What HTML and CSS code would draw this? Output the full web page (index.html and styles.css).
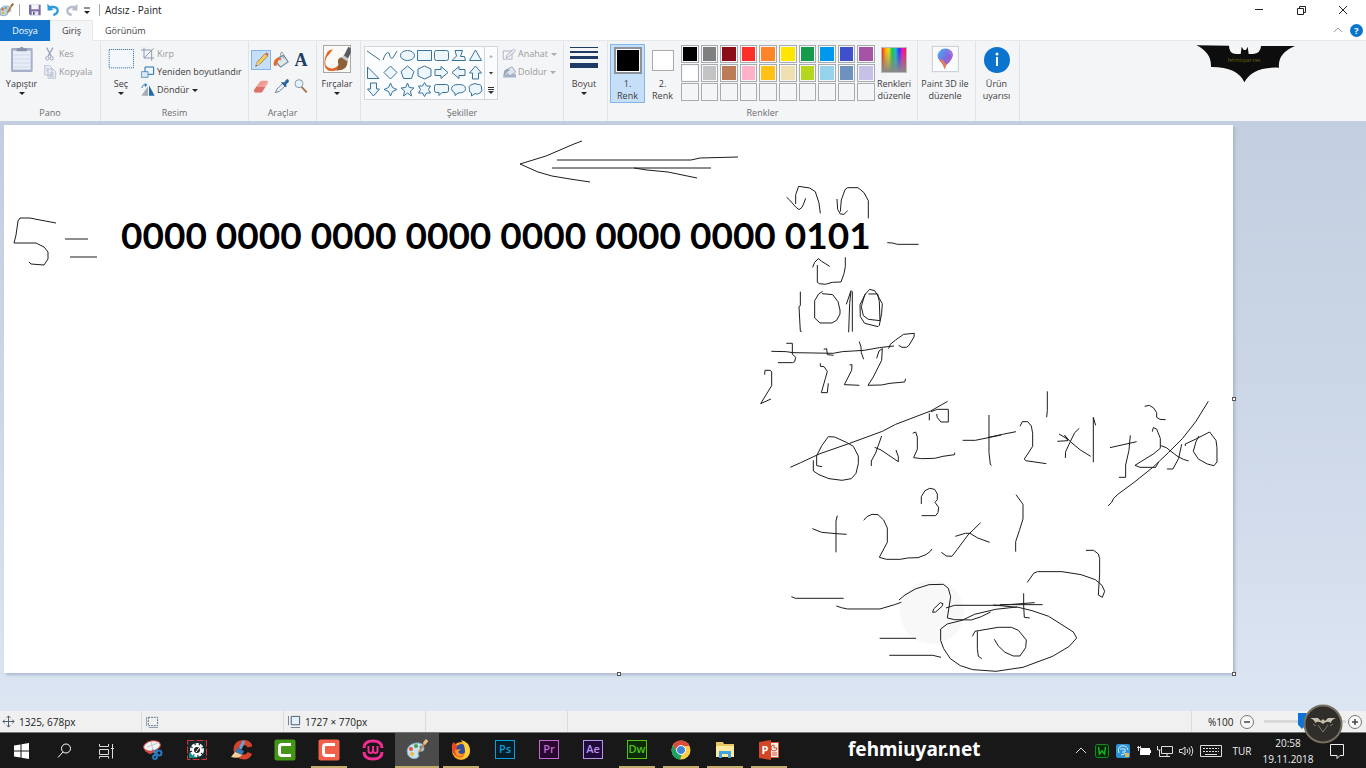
FILE: index.html
```html
<!DOCTYPE html>
<html lang="tr">
<head>
<meta charset="utf-8">
<title>Adsız - Paint</title>
<link rel="stylesheet" href="styles.css">
</head>
<body>
<header class="titlebar">
  <svg class="app-icon" viewBox="0 10 42 42"><path d="M0 32Q2 20 16 19Q32 18 33 31Q33 37 26 37Q20 38 22 45Q15 51 0 46Z" fill="#b9d3e6" stroke="#6f9cc0" stroke-width="2"/><circle cx="8" cy="29" r="4" fill="#e56a3a"/><circle cx="17" cy="25" r="3" fill="#4da63c"/><circle cx="9" cy="40" r="4" fill="#f1b52f"/><path d="M22 39L37 14" stroke="#c17b35" stroke-width="5"/><path d="M34 19L40 12" stroke="#8a5a34" stroke-width="5"/></svg>
  <span class="divider"></span>
  <button class="quick" aria-label="Kaydet"><svg viewBox="84 11 42 42"><path d="M87 16H122V48H91L87 44Z" fill="#7b6ba7"/><path d="M94 16H116V30H94Z" fill="#f6f5fb"/><path d="M95 36H115V48H95Z" fill="#e8e5f3"/><path d="M99 38H104V46H99Z" fill="#5e4f8c"/></svg></button>
  <button class="quick" aria-label="Geri al"><svg viewBox="141 11 42 42"><path d="M150 23H160Q174 24 173 35Q172 44 160 47" fill="none" stroke="#2d9bdd" stroke-width="7"/><path d="M142 13L143 34L161 32Z" fill="#2d9bdd"/></svg></button>
  <button class="quick" aria-label="Yinele"><svg viewBox="198 11 42 42"><path d="M226 23H216Q201 25 202 36Q203 44 215 47" fill="none" stroke="#b5bdcd" stroke-width="7"/><path d="M233 13L232 34L214 32Z" fill="#b5bdcd"/></svg></button>
  <button class="quick more" aria-label="Özelleştir"><svg viewBox="0 0 8 12"><path d="M1 4H7" stroke="#222"/><path d="M1 7H7L4 10Z" fill="#222"/></svg></button>
  <span class="divider"></span>
  <h1>Adsız - Paint</h1>
  <div class="window-controls">
    <button aria-label="Simge durumuna küçült"><svg viewBox="0 0 12 12"><path d="M2 5.5H10" stroke="#222"/></svg></button>
    <button aria-label="Önceki boyut"><svg viewBox="0 0 12 12"><path d="M2.500 4.500H8.500V10.500H2.500ZM4.500 4V2.500H10.500V8.500H9" fill="none" stroke="#222"/></svg></button>
    <button aria-label="Kapat"><svg viewBox="0 0 12 12"><path d="M2 2L10 10M10 2L2 10" stroke="#222"/></svg></button>
  </div>
</header>

<nav class="tabs">
  <button class="tab file">Dosya</button>
  <button class="tab active">Giriş</button>
  <button class="tab">Görünüm</button>
  <div class="tabs-end">
    <button aria-label="Şeridi küçült"><svg viewBox="0 0 12 12"><path d="M2 8L6 4L10 8" fill="none" stroke="#999"/></svg></button>
    <button class="help" aria-label="Yardım">?</button>
  </div>
</nav>

<section class="ribbon">
  <div class="group clipboard">
    <div class="group-body">
      <button class="big"><svg class="i28" viewBox="28 138 84 84"><rect x="37" y="147" width="65" height="72" rx="4" fill="#a7b0c9"/><path d="M43 155H96V212H43Z" fill="#e7ecf6"/><path d="M43 168H96M43 180H96M43 192H96M43 204H96" stroke="#d2daea" stroke-width="3"/><path d="M54 157V148H62Q69 138 76 148H85V157Z" fill="#8993ad"/></svg>Yapıştır<i class="caret"></i></button>
      <div class="stack">
        <button class="small off"><svg viewBox="133 138 36 42"><path d="M141 140L155 166M160 140L145 166" stroke="#9ba6bd" stroke-width="4"/><circle cx="143" cy="172" r="5" fill="none" stroke="#9ba6bd" stroke-width="3"/><circle cx="156" cy="172" r="5" fill="none" stroke="#9ba6bd" stroke-width="3"/></svg>Kes</button>
        <button class="small off"><svg viewBox="131 194 38 42"><path d="M134 196H149L156 203V224H134ZM144 206H159L167 214V234H144Z" fill="#eaeef6" stroke="#a7b0c5" stroke-width="2"/><path d="M138 205H144M138 211H144M148 218H162M148 224H162M148 229H162" stroke="#a7b0c5" stroke-width="2"/></svg>Kopyala</button>
      </div>
    </div>
    <h2>Pano</h2>
  </div>

  <div class="group image">
    <div class="group-body">
      <button class="big"><svg class="i28" viewBox="322 138 84 84"><path d="M328.500 151.500H401.500V206.500H328.500Z" fill="#f4f8fd" stroke="#26689f" stroke-width="3" stroke-dasharray="3 3"/></svg>Seç<i class="caret"></i></button>
      <div class="stack">
        <button class="small off"><svg viewBox="426 140 42 42"><path d="M435 142V173H466M426 149H458V181M435 173L464 144" fill="none" stroke="#8e99b2" stroke-width="3"/></svg>Kırp</button>
        <button class="small"><svg viewBox="426 196 42 42"><path d="M438 202H464V224H438Z" fill="#edf5fc" stroke="#286ca4" stroke-width="3"/><path d="M427 216H447V233H427Z" fill="#d8eafa" stroke="#286ca4" stroke-width="2"/></svg>Yeniden boyutlandır</button>
        <button class="small"><svg viewBox="424 250 42 42"><path d="M425 288L445 260V288Z" fill="#a6adb8"/><path d="M448 257L465 288H448Z" fill="#246aa7"/><path d="M427 265Q428 254 438 256" fill="none" stroke="#2875b5" stroke-width="3"/><path d="M435 250L443 256L436 262Z" fill="#2875b5"/></svg>Döndür<i class="caret"></i></button>
      </div>
    </div>
    <h2>Resim</h2>
  </div>

  <div class="group tools">
    <div class="group-body tool-grid">
      <button class="tool selected" aria-label="Kalem"><svg viewBox="36 34 54 54"><path d="M47 80L51 68L75 42L83 49L59 74Z" fill="#f6cf55" stroke="#7c6740" stroke-width="2"/><path d="M47 80L51 68L59 74Z" fill="#e5c8a0"/><path d="M75 42L80 38L86 44L83 49Z" fill="#d36a63"/><path d="M47 80L49 75L51 77Z" fill="#222"/></svg></button>
      <button class="tool" aria-label="Renk doldur"><svg viewBox="101 37 48 48"><path d="M118 55L132 48L144 66L124 80L114 69Z" fill="#dfe6ed" stroke="#71869b" stroke-width="3"/><path d="M124 62V42Q128 36 131 45V57" fill="none" stroke="#71869b" stroke-width="2"/><path d="M106 76Q103 57 119 54L126 61Q112 59 114 76Z" fill="#e86a25"/></svg></button>
      <button class="tool letter" aria-label="Metin">A</button>
      <button class="tool" aria-label="Silgi"><svg viewBox="38 110 54 54"><path d="M45 148L61 125Q64 121 69 121H84Q88 123 85 130L70 153Q68 157 63 157H48Q42 154 45 148Z" fill="#ee9c93"/><path d="M45 148L52 138H78L68 156H47Q43 154 45 148Z" fill="#dc7166"/><path d="M52 138H77L85 124" fill="none" stroke="#f7c6bf" stroke-width="2"/></svg></button>
      <button class="tool" aria-label="Renk seçici"><svg viewBox="98 110 54 54"><path d="M108 157L113 146L130 130L137 137L120 153Z" fill="#f0f5fa" stroke="#708499" stroke-width="3"/><path d="M126 127L135 127L142 118Q149 116 147 125L140 132V140Z" fill="#246da9" stroke="#194b7b" stroke-width="2"/></svg></button>
      <button class="tool" aria-label="Büyüteç"><svg viewBox="157 110 54 54"><path d="M185 139L201 156" stroke="#a77448" stroke-width="6"/><circle cx="178" cy="130" r="12" fill="#e5f1fb" stroke="#8d9cac" stroke-width="3"/></svg></button>
    </div>
    <h2>Araçlar</h2>
  </div>

  <div class="group brushes">
    <div class="group-body">
      <button class="big"><svg class="i28" viewBox="249 19 85 85"><rect x="250.500" y="20.500" width="82" height="82" fill="#fbf9f5" stroke="#a7a7a7" stroke-width="3"/><path d="M262 41Q268 32 279 33Q269 46 260 56Q246 85 276 91Q289 89 299 77L308 84Q291 101 266 97Q248 88 255 58Z" fill="#e46428"/><path d="M294 70Q294 56 309 56L324 66Q324 98 290 96Q299 84 294 70Z" fill="#8c6138"/><path d="M309 58L326 24L333 29V43L322 65Z" fill="#555b62"/><path d="M306 58L312 50L326 61L322 68Z" fill="#c6cbd0"/></svg>Fırçalar<i class="caret"></i></button>
    </div>
  </div>

  <div class="group shapes">
    <div class="group-body">
      <div class="gallery">
        <div class="shape-grid">
          <button aria-label="Çizgi"><svg viewBox="0 0 17 17"><path d="M2 4L15 13"/></svg></button>
          <button aria-label="Eğri"><svg viewBox="0 0 17 17"><path d="M1 13Q4 4 7 6Q9 15 12 9L15 4" fill="none"/></svg></button>
          <button aria-label="Oval"><svg viewBox="0 0 17 17"><ellipse cx="8.500" cy="8.500" rx="7" ry="5"/></svg></button>
          <button aria-label="Dikdörtgen"><svg viewBox="0 0 17 17"><path d="M1.500 3.500H15.500V13.500H1.500Z"/></svg></button>
          <button aria-label="Yuvarlak dikdörtgen"><svg viewBox="0 0 17 17"><rect x="1.500" y="3.500" width="14" height="10" rx="2"/></svg></button>
          <button aria-label="Çokgen"><svg viewBox="0 0 17 17"><path d="M5 3.500H12.500L10.500 9.500H14.500L15.500 13.500H2L6.500 9Z"/></svg></button>
          <button aria-label="Üçgen"><svg viewBox="0 0 17 17"><path d="M8.500 3L14.500 13.500H2.500Z"/></svg></button>
          <button aria-label="Dik üçgen"><svg viewBox="0 0 17 17"><path d="M2.500 3V14.500H14Z"/></svg></button>
          <button aria-label="Elmas"><svg viewBox="0 0 17 17"><path d="M8.500 2L15 8.500L8.500 15L2 8.500Z"/></svg></button>
          <button aria-label="Beşgen"><svg viewBox="0 0 17 17"><path d="M8.500 2L15 7.500L12.500 14.500H4.500L2 7.500Z"/></svg></button>
          <button aria-label="Altıgen"><svg viewBox="0 0 17 17"><path d="M8.500 2L15 5V12L8.500 15L2 12V5Z"/></svg></button>
          <button aria-label="Sağ ok"><svg viewBox="0 0 17 17"><path d="M2 5.500H8V2.500L15 8.500L8 14.500V11.500H2Z"/></svg></button>
          <button aria-label="Sol ok"><svg viewBox="0 0 17 17"><path d="M15 5.500H9V2.500L2 8.500L9 14.500V11.500H15Z"/></svg></button>
          <button aria-label="Yukarı ok"><svg viewBox="0 0 17 17"><path d="M5.500 15V9H2.500L8.500 2L14.500 9H11.500V15Z"/></svg></button>
          <button aria-label="Aşağı ok"><svg viewBox="0 0 17 17"><path d="M5.500 2V8H2.500L8.500 15L14.500 8H11.500V2Z"/></svg></button>
          <button aria-label="Dört köşeli yıldız"><svg viewBox="0 0 17 17"><path d="M8.500 2L10.500 6.500L15 8.500L10.500 10.500L8.500 15L6.500 10.500L2 8.500L6.500 6.500Z"/></svg></button>
          <button aria-label="Beş köşeli yıldız"><svg viewBox="0 0 17 17"><path d="M8.500 2L10.300 6.500L15 7L11.500 10L12.500 15L8.500 12L4.500 15L5.500 10L2 7L6.700 6.500Z"/></svg></button>
          <button aria-label="Altı köşeli yıldız"><svg viewBox="0 0 17 17"><path d="M8.500 1.500L10.500 5H14.500L12.500 8.500L14.500 12H10.500L8.500 15.500L6.500 12H2.500L4.500 8.500L2.500 5H6.500Z"/></svg></button>
          <button aria-label="Dikdörtgen belirtme"><svg viewBox="0 0 17 17"><path d="M3.500 3.500H13.500Q15.500 3.500 15.500 5.500V9.500Q15.500 11.500 13.500 11.500H9L6 14.500V11.500H3.500Q1.500 11.500 1.500 9.500V5.500Q1.500 3.500 3.500 3.500Z"/></svg></button>
          <button aria-label="Oval belirtme"><svg viewBox="0 0 17 17"><path d="M5 12Q1.500 10.500 1.500 7.500Q2 3.500 8.500 3.500Q15.500 3.500 15.500 7.500Q15.500 12 8 12L5 14.500Z"/></svg></button>
          <button aria-label="Bulut belirtme"><svg viewBox="0 0 17 17"><path d="M5 3.500Q8 1.500 11 3.500Q15 3.500 14.500 7Q16 10 13 12Q10 14 8 12.500L4.500 15V12Q1.500 11 2.500 8.500Q1 4.500 5 3.500Z"/></svg></button>
        </div>
        <div class="gallery-scroll">
          <button aria-label="Yukarı"><svg viewBox="0 0 12 12"><path d="M4 7.500H8L6 5Z" fill="#aaa"/></svg></button>
          <button aria-label="Aşağı"><svg viewBox="0 0 12 12"><path d="M4 5H8L6 7.500Z" fill="#333"/></svg></button>
          <button aria-label="Tümü"><svg viewBox="0 0 12 12"><path d="M3 3.500H9M3 5.500H9" stroke="#333"/><path d="M3 7H9L6 10Z" fill="#333"/></svg></button>
        </div>
      </div>
      <div class="stack">
        <button class="small off"><svg viewBox="784 20 46 42"><path d="M788 31H817V58H788Z" fill="none" stroke="#a8b0c0" stroke-width="3"/><path d="M797 53L800 44L822 25L828 31L806 51Z" fill="#e7ebf2" stroke="#909bb0" stroke-width="2"/></svg>Anahat<i class="caret"></i></button>
        <button class="small off"><svg viewBox="784 76 46 42"><path d="M788 104H830V115H788Z" fill="#a7b3c8"/><path d="M803 87L817 80L829 97L810 110L800 99Z" fill="#dfe5ef" stroke="#98a5bb" stroke-width="3"/><path d="M790 105Q788 87 804 86L811 93Q798 92 797 105Z" fill="#98a5bb"/></svg>Doldur<i class="caret"></i></button>
      </div>
    </div>
    <h2>Şekiller</h2>
  </div>

  <div class="group size">
    <div class="group-body">
      <button class="big"><svg class="i28" viewBox="0 0 28 28"><path d="M0 2H28V3H0ZM0 6H28V8H0ZM0 11H28V14H0ZM0 18H28V23H0Z" fill="#1e3a66"/></svg>Boyut<i class="caret"></i></button>
    </div>
  </div>

  <div class="group colors">
    <div class="group-body">
      <button class="color-choice selected"><span class="well black"></span>1.<br>Renk</button>
      <button class="color-choice"><span class="well white"></span>2.<br>Renk</button>
      <div class="palette">
        <button class="c1" aria-label="Siyah"></button><button class="c2" aria-label="Gri"></button><button class="c3" aria-label="Koyu kırmızı"></button><button class="c4" aria-label="Kırmızı"></button><button class="c5" aria-label="Turuncu"></button><button class="c6" aria-label="Sarı"></button><button class="c7" aria-label="Yeşil"></button><button class="c8" aria-label="Turkuaz"></button><button class="c9" aria-label="Çivit mavisi"></button><button class="c10" aria-label="Mor"></button>
        <button class="c11" aria-label="Beyaz"></button><button class="c12" aria-label="Açık gri"></button><button class="c13" aria-label="Kahverengi"></button><button class="c14" aria-label="Gül"></button><button class="c15" aria-label="Altın"></button><button class="c16" aria-label="Açık sarı"></button><button class="c17" aria-label="Limon"></button><button class="c18" aria-label="Açık turkuaz"></button><button class="c19" aria-label="Mavi gri"></button><button class="c20" aria-label="Lavanta"></button>
        <button aria-label="Özel 1"></button><button aria-label="Özel 2"></button><button aria-label="Özel 3"></button><button aria-label="Özel 4"></button><button aria-label="Özel 5"></button><button aria-label="Özel 6"></button><button aria-label="Özel 7"></button><button aria-label="Özel 8"></button><button aria-label="Özel 9"></button><button aria-label="Özel 10"></button>
      </div>
      <button class="big"><span class="rainbow"></span>Renkleri<br>düzenle</button>
    </div>
    <h2>Renkler</h2>
  </div>

  <div class="group paint3d">
    <div class="group-body">
      <button class="big"><svg class="i28" viewBox="994 31 84 84"><defs><linearGradient id="pin" x1="0" y1="0" x2="1" y2="1"><stop offset="0" stop-color="#39b8ee"/><stop offset=".5" stop-color="#7c6be0"/><stop offset="1" stop-color="#e0529b"/></linearGradient></defs><rect x="998" y="35" width="78" height="76" fill="#fafbfc" stroke="#c9ccd1" stroke-width="3"/><path d="M1035 103Q1031 88 1020 78Q1008 65 1018 52Q1029 37 1048 44Q1064 54 1057 71Q1052 83 1040 91Z" fill="url(#pin)"/><path d="M1018 73Q1031 72 1040 91L1035 103Q1031 88 1018 73Z" fill="#f27a4f"/><path d="M1042 44Q1062 49 1059 65Q1047 63 1042 44Z" fill="#9b72e3"/></svg>Paint 3D ile<br>düzenle</button>
    </div>
  </div>

  <div class="group notice">
    <div class="group-body">
      <button class="big"><svg class="i28" viewBox="0 0 28 28"><circle cx="14" cy="15" r="13" fill="#0a74cf"/><path d="M14 12V21" stroke="#fff" stroke-width="2"/><circle cx="14" cy="9" r="1.500" fill="#fff"/></svg>Ürün<br>uyarısı</button>
    </div>
  </div>

  <svg class="brand" viewBox="141 132 300 117"><path d="M142 136L240 137Q240 162 262 162H275L278 140L284 150H291L296 140L299 162H312Q335 160 336 138H438Q385 160 390 203Q310 200 286 247Q265 200 186 201Q188 158 142 136Z" fill="#0d0d0d"/><text x="285" y="186" text-anchor="middle">fehmiuyar.net</text></svg>
</section>

<main class="workspace">
  <div class="canvas">
    <svg class="ink" viewBox="4 125 1229 548" preserveAspectRatio="xMinYMin slice">
      <circle cx="932" cy="612" r="32" fill="#f8f8f8"/>
      <path d="M582 141L574 144L546 156L520 164L538 172L552 176L570 179L590 182"/>
      <path d="M557 160H691L700 158L738 157M552 168H711M634 168L647 170L668 172L697 178"/>
      <path d="M56 223L40 220L30 218H20L18 221L16 235L14 243H36L44 247L48 252V259L44 265L31 264L29 262M65 239H88M70 257H97"/>
      <g transform="translate(750 130) scale(.3333)">
        <path d="M110 202L118 209L137 231L147 239L156 232L162 219L167 205M137 222V194L146 169L179 174L196 185L207 219L211 250M261 207L263 238L271 252L282 253L293 242M271 245L274 210L285 179L293 173H324L342 188L355 212V265"/>
        <path d="M412 338L427 339L442 343H506M188 412L194 397L205 386L215 394L239 409M202 405V457L208 461L226 463L247 457L273 456L282 431L286 410V382"/>
        <path d="M151 485V527L147 530L151 604H155M218 484L206 492L194 512V564L210 579H246L260 571L270 552V540L264 515L248 494L216 491M289 523L303 482L299 520L296 607M307 484V605"/>
        <path d="M347 491L330 524L331 560L344 580L384 590L388 586L395 550L397 521L381 493L374 482L359 478L344 495L334 530L340 557L355 568L390 572L388 515L383 492H355"/>
        <path d="M64 664L109 665L128 668L250 670L277 665L343 661L388 653L432 648M109 640H127V672L137 682L134 695L128 698H84M221 658L230 656L232 674L251 676M328 635L333 651L334 668L341 688M416 656L421 643L437 630L461 613L493 610L492 621L477 646L470 652H456L446 646"/>
        <path d="M44 734L45 721H61L65 726V767L32 821L63 807M211 700V709L222 710L232 724L226 746L214 788H232L235 760M299 705L306 704L305 721L283 764L328 766M380 685L387 663L397 656L395 691L370 741L354 766L395 765L420 760L464 756L467 746"/>
      </g>
      <g transform="translate(760 380) scale(.3333)">
        <path d="M91 262L122 248L180 221L269 190L367 154L407 133L512 93L563 64M205 170L224 171L259 187L280 199L295 228V251L288 280L274 296L246 301L207 296L177 284L160 273V241M205 170L186 196L170 227V257L186 260M508 121V100M513 95L532 88H565V126H543L532 113L530 102"/>
        <path d="M365 168L347 219L334 243V258M344 202L363 210L415 245V230L408 210M458 160L467 156L472 171V208L461 233L485 236L524 235L549 229L584 224V218M608 181H646L724 165M687 105V217L691 253L695 256"/>
        <path d="M484 372V350L495 332L509 325L524 328L532 342V359L525 367L536 382L534 398L527 407H485M157 446L185 457L228 461L260 463M232 407L228 423V517M311 421L321 410L336 403L354 404L371 420L382 444V487L358 532L379 538H421L443 534L474 533L498 524L511 514L516 507"/>
        <path d="M544 517L559 528L576 529L592 508L624 465L662 428M586 469L616 460H630L653 474L689 487M94 650L106 655H251M229 678L244 683L262 687H360L404 674L424 667M417 660L435 645L466 627L507 614L550 613L565 625L572 650L562 714L584 719L634 720L664 710L692 696M558 684L584 676H720M359 775H468M388 826H518L543 832"/>
        <path d="M518 697L521 687L541 668L549 671L546 679L527 696Z" fill="#fff"/>
      </g>
      <g transform="translate(940 380) scale(.3333)">
        <path d="M240 139L247 125H263L274 138L278 160V199L267 216L253 237L257 242L319 251M322 34V92L320 112M146 172L188 163L228 155M352 184L384 182L374 166L390 184L421 210L452 229M357 162L384 178M418 145L404 158L390 187L377 215L376 234M460 247V112L467 136M510 203L590 185M571 166L567 211L557 255V292H537"/>
        <path d="M614 79L628 76L641 84L650 98V112L660 118L677 119M637 155L640 143L650 147L661 175V205L640 222L585 256L600 262H647L656 246M805 64L768 124L728 175L686 217L641 260L585 305L535 342L521 355L515 367L504 378M663 197L679 203L711 228L730 238L746 243M725 193L716 235L699 267H681M736 198V192L768 177L809 156L828 181L831 203V246L822 257L802 252L775 237L760 214L768 185L777 168"/>
        <path d="M228 344L249 373V417L238 452L227 485V515M438 511H461L475 522L479 536V582L475 645L487 652L494 634L486 616L466 599L423 584L366 575H292L281 580L262 607M165 677L284 668M251 640V678L253 712L269 714M300 674H308"/>
        <path d="M2 747L22 732L66 721L104 703L167 688L231 681L276 692L326 709L400 756L410 774L388 799L338 829L249 862L168 874L98 869L61 857L31 836L11 806L2 782ZM97 769L105 754L175 742H214L235 751L259 780L257 803L240 828H220L195 817L175 798L163 778"/>
        <path d="M112 754V806L115 829L125 836M180 674H300M231 682L160 675"/>
      </g>
    </svg>
    <p class="binary">0000 0000 0000 0000 0000 0000 0000 0101</p>
    <span class="handle right"></span><span class="handle bottom"></span><span class="handle corner"></span>
  </div>
</main>

<footer class="status">
  <div class="cell"><svg viewBox="0 0 14 14"><path d="M7 1V13M1 7H13M5 3L7 1L9 3M5 11L7 13L9 11M3 5L1 7L3 9M11 5L13 7L11 9" fill="none" stroke="#456"/></svg>1325, 678px</div>
  <div class="cell"><svg viewBox="0 0 14 14"><path d="M2.500 2.500H12.500V11.500H2.500Z" fill="none" stroke="#567" stroke-dasharray="2 1"/><path d="M.5 2V12M3 13.500H13" stroke="#89a"/></svg></div>
  <div class="cell"><svg viewBox="0 0 14 14"><path d="M3.500 1.500H12.500V10.500H3.500Z" fill="#e4f0fb" stroke="#456"/><path d="M.5 1V11M3 13.500H13" stroke="#678"/></svg>1727 × 770px</div>
  <div class="cell"></div>
  <div class="cell grow"></div>
  <div class="zoom">
    <label for="zoom">%100</label>
    <button aria-label="Uzaklaştır"><svg viewBox="0 0 14 14"><circle cx="7" cy="7" r="6.500" fill="#f8f8f8" stroke="#777"/><path d="M4 7H10" stroke="#444" stroke-width="1.500"/></svg></button>
    <input id="zoom" type="range" min="0" max="100" value="46">
    <button aria-label="Yakınlaştır"><svg viewBox="0 0 14 14"><circle cx="7" cy="7" r="6.500" fill="#f8f8f8" stroke="#777"/><path d="M4 7H10M7 4V10" stroke="#444" stroke-width="1.500"/></svg></button>
    <svg class="medal" viewBox="0 0 40 40"><circle cx="20" cy="20" r="18.500" fill="#302e2b" stroke="#777062" stroke-width="2"/><path d="M7 14H15L18 17L20 15L22 17L25 14H33Q28 16 28 19Q24 16 20 20Q16 16 12 19Q12 16 7 14Z" fill="#c9bfae"/><path d="M10 20L13 22M15 21L20 28L25 21M27 22L30 20" fill="none" stroke="#81786b"/></svg>
  </div>
</footer>

<nav class="taskbar">
  <div class="system">
    <button aria-label="Başlat"><svg viewBox="0 0 22 22"><path d="M3 5.500L9.500 4.500V10.500H3ZM10.500 4.300L18 3V10.500H10.500ZM3 11.500H9.500V17.500L3 16.500ZM10.500 11.500H18V19L10.500 17.700Z" fill="#fff"/></svg></button>
    <button aria-label="Ara"><svg viewBox="0 0 22 22"><circle cx="12" cy="8.500" r="4.500" fill="none" stroke="#fff"/><path d="M9 12L4 17.500" stroke="#fff"/></svg></button>
    <button aria-label="Görev görünümü"><svg viewBox="0 0 22 22"><path d="M2.500 4V6.500H11.500V4M2.500 9.500H11.500V14.500H2.500ZM2.500 18.500V16.500H11.500V18.500M15.500 4V18.500M14 8.500H17" fill="none" stroke="#ddd"/></svg></button>
  </div>
  <div class="apps">
    <button aria-label="Ekran Alıntısı"><svg viewBox="0 0 22 22"><ellipse cx="10" cy="7" rx="8.500" ry="5" transform="rotate(-12 10 7)" fill="#f3f3f3" stroke="#c84747"/><path d="M5 8L16 4M9 3L11 11" stroke="#bcc"/><path d="M10 11L16 16M15 10L13 17" stroke="#3b8fd2" stroke-width="2"/><circle cx="17" cy="14" r="2.500" fill="none" stroke="#2777be" stroke-width="2"/><circle cx="13" cy="18" r="2" fill="none" stroke="#2777be" stroke-width="2"/><path d="M3 11L8 14L12 12" stroke="#d34d4d" stroke-width="2" fill="none"/></svg></button>
    <button aria-label="Ayar"><svg viewBox="0 0 22 22"><path d="M1.500 1.500H20.500V20.500H1.500Z" fill="#16282c" stroke="#d93434" stroke-dasharray="7 2"/><path d="M3 14L11 11V19H3Z" fill="#168989"/><circle cx="11" cy="11" r="5.500" fill="none" stroke="#f4f4f4" stroke-width="3" stroke-dasharray="3 1"/><circle cx="11" cy="11" r="4" fill="#222" stroke="#fff" stroke-width="2"/><path d="M10 13L13 9" stroke="#fff"/></svg></button>
    <button aria-label="CCleaner"><svg viewBox="0 0 22 22"><path d="M20 8Q19 3.500 13.500 3.500Q6 4 6 11Q7 18 14 18Q18 18 20 14" fill="none" stroke="#d6422b" stroke-width="5"/><path d="M14 2L10 10" stroke="#67a1d4" stroke-width="3"/><path d="M7 9L14 12L12 16L5 13Z" fill="#3477b2"/><path d="M5 13L12 16Q9 20 1 18Z" fill="#f3d19a"/></svg></button>
    <button aria-label="Camtasia"><svg viewBox="0 0 22 22"><rect x=".5" y=".5" width="21" height="21" rx="2" fill="#459516"/><path d="M17 5.500H8Q5.500 5.500 5.500 8V14Q5.500 16.500 8 16.500H17" fill="none" stroke="#fff" stroke-width="3"/></svg></button>
    <button aria-label="Camtasia Kayıt" class="open"><svg viewBox="0 0 22 22"><rect x=".5" y=".5" width="21" height="21" rx="2" fill="#f2604a"/><path d="M17 5.500H8Q5.500 5.500 5.500 8V14Q5.500 16.500 8 16.500H17" fill="none" stroke="#fff" stroke-width="3"/></svg></button>
    <button aria-label="Wamp"><svg viewBox="0 0 22 22"><path d="M2 9Q2 2 11 2Q20 2 20 9M2 13Q2 20 11 20Q20 20 20 13" fill="none" stroke="#ef2d92" stroke-width="3"/><path d="M6.500 7V12Q6.500 14 8.500 14Q11 14 11 11V7V11Q11 14 13.500 14Q15.500 14 15.500 12V7" fill="none" stroke="#ef2d92" stroke-width="2"/></svg></button>
    <button aria-label="Paint" class="current"><svg viewBox="0 0 22 22"><path d="M1 12Q2 5 10 4Q18 3 18 10Q18 13 14 12Q11 13 13 17Q11 21 5 19Q1 17 1 12Z" fill="#c7e1ef" stroke="#7ba7bd"/><circle cx="5" cy="10" r="2" fill="#e25436"/><circle cx="10" cy="7" r="2" fill="#459f4b"/><circle cx="15" cy="8" r="1.500" fill="#3e74b8"/><circle cx="6" cy="15" r="2" fill="#efb841"/><path d="M13 13L20 2" stroke="#c58b4e" stroke-width="2"/><path d="M18 5L21 1" stroke="#eac17d" stroke-width="3"/></svg></button>
    <button aria-label="Firefox" class="open"><svg viewBox="0 0 22 22"><circle cx="11" cy="12" r="9" fill="#f5a621"/><path d="M2 10Q1 5 4 3L6 6L10 7L16 10L15 17Q7 21 2 12Z" fill="#e84629"/><circle cx="11.500" cy="10" r="5" fill="#304e9e"/><path d="M11 1Q20 3 20 12Q19 20 11 20Q19 13 11 1Z" fill="#ffcf35"/><path d="M5 11L11 10L8 13Q11 17 15 14Q12 20 6 16Z" fill="#ff9826"/></svg></button>
    <button><b class="adobe ps">Ps</b></button>
    <button><b class="adobe pr">Pr</b></button>
    <button><b class="adobe ae">Ae</b></button>
    <button class="open"><b class="adobe dw">Dw</b></button>
    <button aria-label="Chrome" class="open"><svg viewBox="0 0 22 22"><circle cx="11" cy="11" r="9.500" fill="#ffcd41"/><path d="M3 6Q5 1.500 11 1.500Q17 1.500 19.500 7H11L7 13Z" fill="#dd4b3f"/><path d="M3 6L7 13L12 15L10 20.500Q2 20 1.500 11Q1.500 8 3 6Z" fill="#1ba260"/><circle cx="11" cy="11" r="4.500" fill="#4285d8" stroke="#fff"/></svg></button>
    <button aria-label="Dosya Gezgini" class="open"><svg viewBox="0 0 22 22"><path d="M2 3H9L10 5H20V18H2Z" fill="#e9c661"/><path d="M2 7H20V18H2Z" fill="#ffe8a0"/><path d="M5 19V12H17V19H14V15H8V19Z" fill="#3da5df"/></svg></button>
    <button aria-label="PowerPoint" class="open"><svg viewBox="0 0 22 22"><path d="M12 3.500H20.500V18.500H12Z" fill="#f8eee9" stroke="#d25232"/><path d="M16 6V9H19A3 3 0 1 1 16 6M14 14H19M14 16H19" fill="none" stroke="#d25232"/><path d="M1 3L13 1V21L1 19Z" fill="#d24726"/><text x="3.500" y="15" font-size="11" font-weight="700" fill="#fff">P</text></svg></button>
  </div>
  <strong class="watermark">fehmiuyar.net</strong>
  <div class="tray">
    <button aria-label="Gizli simgeler"><svg viewBox="0 0 16 16"><path d="M3 10L8 5L13 10" fill="none" stroke="#ddd"/></svg></button>
    <button aria-label="Wamp"><svg viewBox="0 0 16 16"><rect x="1.500" y="1.500" width="13" height="13" rx="2" fill="#082908" stroke="#149020"/><path d="M4.500 4L5.500 11L8 8L10.500 11L11.500 4" fill="none" stroke="#19b329" stroke-width="1.500"/></svg></button>
    <button aria-label="Uygulama"><svg viewBox="0 0 16 16"><rect x="1" y="1" width="14" height="14" rx="2" fill="#2c93d5"/><path d="M4 10Q2 5 6 3Q12 2 13 7M5 6H10V9H7M6 12L12 10" fill="none" stroke="#d5efff"/><path d="M10 10H14V14H10Z" fill="#deb858"/></svg></button>
    <button aria-label="Pil"><svg viewBox="0 0 16 16"><path d="M4 5H14V12H4Z" fill="#fff"/><path d="M14 7H15V10H14Z" fill="#fff"/><path d="M1 4.500H5M2.500 3V8M4.500 3V8" stroke="#ddd"/></svg></button>
    <button aria-label="Ağ"><svg viewBox="0 0 16 16"><path d="M4.500 3.500H15.500V10.500H4.500ZM10 11V14M7 13.500H13M.5 3V7H3.500M2.500 7V13.500H7" fill="none" stroke="#ddd"/></svg></button>
    <button aria-label="Ses"><svg viewBox="0 0 16 16"><path d="M1.500 6.500H4L7 4V12L4 9.500H1.500ZM9 6Q10.500 8 9 10M11 4.500Q13.500 8 11 11.500M13 3Q16.500 8 13 13" fill="none" stroke="#ddd"/></svg></button>
    <button class="keyboard" aria-label="Klavye"><svg viewBox="0 0 22 16"><path d="M.5 2.500H21.500V13.500H.5Z" fill="none" stroke="#ddd"/><path d="M3 5.500H19M3 8.500H19" stroke="#ddd" stroke-dasharray="2 1"/><path d="M5 11.500H17" stroke="#ddd"/></svg></button>
    <button class="language">TUR</button>
    <button class="clock"><time datetime="2018-11-19T20:58">20:58<br>19.11.2018</time></button>
    <button class="notifications" aria-label="Bildirimler"><svg viewBox="0 0 16 16"><path d="M1.500 1.500H14.500V12.500H11L8 15.500V12.500H1.500Z" fill="none" stroke="#eee"/></svg></button>
  </div>
</nav>
</body>
</html>
```
FILE: styles.css
```css
* { box-sizing: border-box; }
body {
  margin: 0;
  height: 100vh;
  min-height: 400px;
  display: flex;
  flex-direction: column;
  overflow: hidden;
  font: 9px/12px "Open Sans", "Noto Sans", sans-serif;
  color: #3c3c3c;
  background: #fff;
}
button {
  font: inherit;
  color: inherit;
  background: none;
  border: 0;
  padding: 0;
}
svg { display: block; flex: none; }
h1, h2, p { margin: 0; font-weight: 400; }

/* Title bar */
.titlebar { display: flex; align-items: center; height: 20px; flex: none; padding-right: 2px; }
.app-icon { width: 14px; height: 14px; }
.divider { width: 1px; height: 12px; margin: 0 5px; background: #aaa; }
.titlebar h1 { font-size: 10px; color: #222; }
.quick { margin: 0 2px 0 3px; }
.quick svg { width: 14px; height: 14px; }
.quick.more { margin: 0 3px 0 1px; }
.quick.more svg { width: 8px; height: 12px; }
.window-controls { display: flex; margin-left: auto; }
.window-controls button { width: 42px; display: grid; place-items: center; }
.window-controls svg { width: 12px; height: 12px; }

/* Tabs */
.tabs { display: flex; height: 21px; flex: none; border-bottom: 1px solid #e6e7e9; }
.tab { padding: 0 12px; height: 21px; }
.tab.file { width: 50px; padding: 0; background: #1072cb; color: #fff; }
.tab.active { width: 43px; padding: 0; background: #f4f5f7; border: 1px solid #e6e7e9; border-bottom: 0; }
.tabs-end { display: flex; align-items: center; gap: 6px; margin-left: auto; padding-right: 3px; }
.tabs-end svg { width: 12px; height: 12px; }
.help { width: 13px; height: 13px; border-radius: 50%; background: #0a74cf; color: #fff; font-weight: 700; line-height: 13px; }

/* Ribbon */
.ribbon { display: flex; height: 80px; flex: none; background: #f4f5f7; }
.group { display: flex; flex-direction: column; flex: none; border-right: 1px solid #e1e3e6; }
.group-body { display: flex; flex: 1; padding-top: 4px; }
.group h2 { font-size: 9px; line-height: 16px; text-align: center; color: #6c6c6c; }
.clipboard { width: 101px; }
.image { width: 148px; }
.tools { width: 68px; }
.brushes { width: 44px; }
.shapes { width: 203px; }
.size { width: 44px; }
.colors { width: 310px; }
.paint3d { width: 58px; }
.notice { width: 44px; }
.big { display: flex; flex-direction: column; align-items: center; width: 43px; }
.brushes .big, .size .big { width: 40px; }
.i28 { width: 28px; height: 28px; margin-bottom: 5px; }
.paint3d .big { width: 54px; }
.notice .big { width: 41px; }
.big { white-space: nowrap; }
.caret { border: 3px solid transparent; border-top-color: #222; border-bottom: 0; }
.big .caret { margin-top: 2px; }
.stack { display: flex; flex-direction: column; }
.small { display: flex; align-items: center; gap: 2px; height: 18px; white-space: nowrap; }
.small svg { width: 14px; height: 14px; }
.small .caret { margin-left: 1px; }
.off { color: #9a9a9a; }
.off .caret { border-top-color: #aaa; }
.image .big { width: 40px; }
.tool-grid { display: grid; grid-template-columns: repeat(3, 20px); grid-template-rows: 20px 20px; row-gap: 6px; padding: 9px 0 0 2px; }
.tool { display: grid; place-items: center; }
.tool svg { width: 18px; height: 18px; }
.tool.selected, .color-choice.selected { background: #c5dff8; border: 1px solid #83b5e6; }
.letter { font: 700 18px/20px "Liberation Serif", serif; color: #203d67; }
.shapes .group-body { padding-left: 3px; }
.gallery { display: flex; width: 134px; height: 54px; margin-top: 1px; border: 1px solid #d2d5d9; background: #fbfcfe; }
.shape-grid { display: grid; grid-template-columns: repeat(7, 17px); grid-template-rows: repeat(3, 17px); }
.shape-grid svg { width: 17px; height: 17px; fill: #eef6fd; stroke: #3b7299; }
.gallery-scroll { display: grid; flex: 1; border-left: 1px solid #d2d5d9; }
.gallery-scroll button { display: grid; place-items: center; }
.gallery-scroll svg { width: 12px; height: 12px; }
.shapes .stack { margin-left: 4px; }

/* Colours */
.colors .group-body { padding-top: 3px; padding-left: 2px; }
.color-choice { width: 35px; height: 59px; display: flex; flex-direction: column; align-items: center; border: 1px solid transparent; }
.well { width: 28px; height: 28px; margin: 2px 0 4px; border: 2px solid #8b929a; box-shadow: inset 0 0 0 1px #fff; }
.well.black { background: #000; }
.well.white { width: 22px; height: 22px; margin: 5px 0 7px; border: 1px solid #aaa; background: #fff; }
.palette { display: grid; grid-template-columns: repeat(10, 1fr); grid-template-rows: repeat(3, 18px); gap: 1px; width: 195px; height: 56px; margin: 1px 0 0 1px; }
.palette button { border: 1px solid #a8abaf; box-shadow: inset 0 0 0 1px #f6f7f8; margin-right: 1px; }
.colors .big { width: 36px; padding-top: 3px; }
.rainbow { width: 26px; height: 26px; margin-bottom: 5px; border: 1px solid #bbb; background: linear-gradient(#8880 10%, #888), linear-gradient(90deg, #f22, #fa0, #dfdf22, #1cc53a, #1bd, #33e, #e1c, #f22); }
.c1 { background: #000; } .c2 { background: #7f7f7f; } .c3 { background: #8b0d18; } .c4 { background: #fc3028; } .c5 { background: #ff8528; }
.c6 { background: #ffe600; } .c7 { background: #169b4c; } .c8 { background: #0098ec; } .c9 { background: #4050cc; } .c10 { background: #a753a5; }
.c11 { background: #fff; } .c12 { background: #c3c3c3; } .c13 { background: #bd7c58; } .c14 { background: #ffb1ca; } .c15 { background: #ffc214; }
.c16 { background: #f0dfb0; } .c17 { background: #b4d71e; } .c18 { background: #95d3ed; } .c19 { background: #6e91bd; } .c20 { background: #c8c1e7; }
.brand { width: 100px; height: 39px; margin: 3px 70px 0 auto; }
.brand text { font: 15px "Open Sans", sans-serif; fill: #746414; }

/* Drawing area */
.workspace { flex: 1; min-height: 0; padding: 4px 133px 38px 4px; background: linear-gradient(#c3cee0, #ccd7e8 50%, #dce6f3); }
.canvas { position: relative; height: 100%; background: #fff; box-shadow: 2px 2px 3px #a8b6cc; }
.ink { position: absolute; inset: 0; width: 100%; height: 100%; fill: none; stroke: #1c1c1c; }
.ink circle { stroke: none; }
.ink path { vector-effect: non-scaling-stroke; }
.binary { padding: 84px 0 0 117px; font: 700 37px/52px Lato, "Open Sans", sans-serif; color: #000; white-space: nowrap; }
.handle { position: absolute; width: 4px; height: 4px; background: #fff; border: 1px solid #555; }
.handle.right { right: -3px; top: calc(50% - 2px); }
.handle.bottom { bottom: -3px; left: calc(50% - 2px); }
.handle.corner { right: -3px; bottom: -3px; }

/* Status bar */
.status { display: flex; flex: none; height: 21px; background: #f0f0f0; font-size: 10px; color: #222; }
.cell { display: flex; align-items: center; gap: 4px; width: 142px; padding-left: 2px; border-right: 1px solid #dcdcdc; }
.cell + .cell { padding-left: 4px; }
.cell svg { width: 13px; height: 13px; }
.cell.grow { flex: 1; }
.zoom { position: relative; display: flex; align-items: center; width: 174px; padding: 0 4px 0 16px; }
.zoom label { width: 32px; }
.zoom button svg { width: 14px; height: 14px; }
.zoom input { appearance: none; flex: 1; min-width: 0; height: 18px; margin: 0 2px 0 10px; background: none; }
.zoom input::-webkit-slider-runnable-track { height: 3px; background: #d8d8d8; }
.zoom input::-webkit-slider-thumb { appearance: none; width: 9px; height: 16px; margin-top: -7px; background: #0a74d8; clip-path: polygon(0 0, 100% 0, 100% 70%, 50% 100%, 0 70%); }
.medal { position: absolute; right: 23px; top: -7px; width: 40px; height: 40px; z-index: 2; }

/* Taskbar */
.taskbar { display: flex; height: 36px; flex: none; background: #181818; border-top: 1px solid #777; color: #eee; }
.taskbar button { display: grid; place-items: center; }
.system { display: flex; margin-right: 2px; }
.system button { width: 43px; }
.apps { display: flex; }
.apps button { width: 44px; border-bottom: 2px solid transparent; }
.system svg, .apps svg { width: 22px; height: 22px; }
.apps .open { background: linear-gradient(#c3ab6a, #c3ab6a) center bottom / 36px 2px no-repeat border-box; }
.apps .current { background: #4b4b4b; border-bottom-color: #c3ab6a; }
.apps text { font-family: "Open Sans", sans-serif; }
.adobe { width: 20px; height: 19px; border: 1px solid; font: 600 11px/16px "Open Sans", sans-serif; }
.ps { color: #0a9fdc; background: #061e2a; }
.pr { color: #c36bd5; background: #2a0730; }
.ae { color: #b894ea; background: #1f0b3c; }
.dw { color: #50c514; background: #0a2b05; }
.watermark { flex: 1; padding-left: 57px; font: 700 19px/32px "Noto Sans", sans-serif; color: #fff; }
.tray { display: flex; font-size: 10px; line-height: 16px; padding-right: 10px; }
.tray button { width: 21px; }
.tray svg { width: 16px; height: 16px; }
.tray .keyboard { width: 30px; }
.tray .keyboard svg { width: 22px; }
.tray .language { width: 32px; }
.tray .clock { width: 60px; }
.tray .notifications { width: 38px; }
```
